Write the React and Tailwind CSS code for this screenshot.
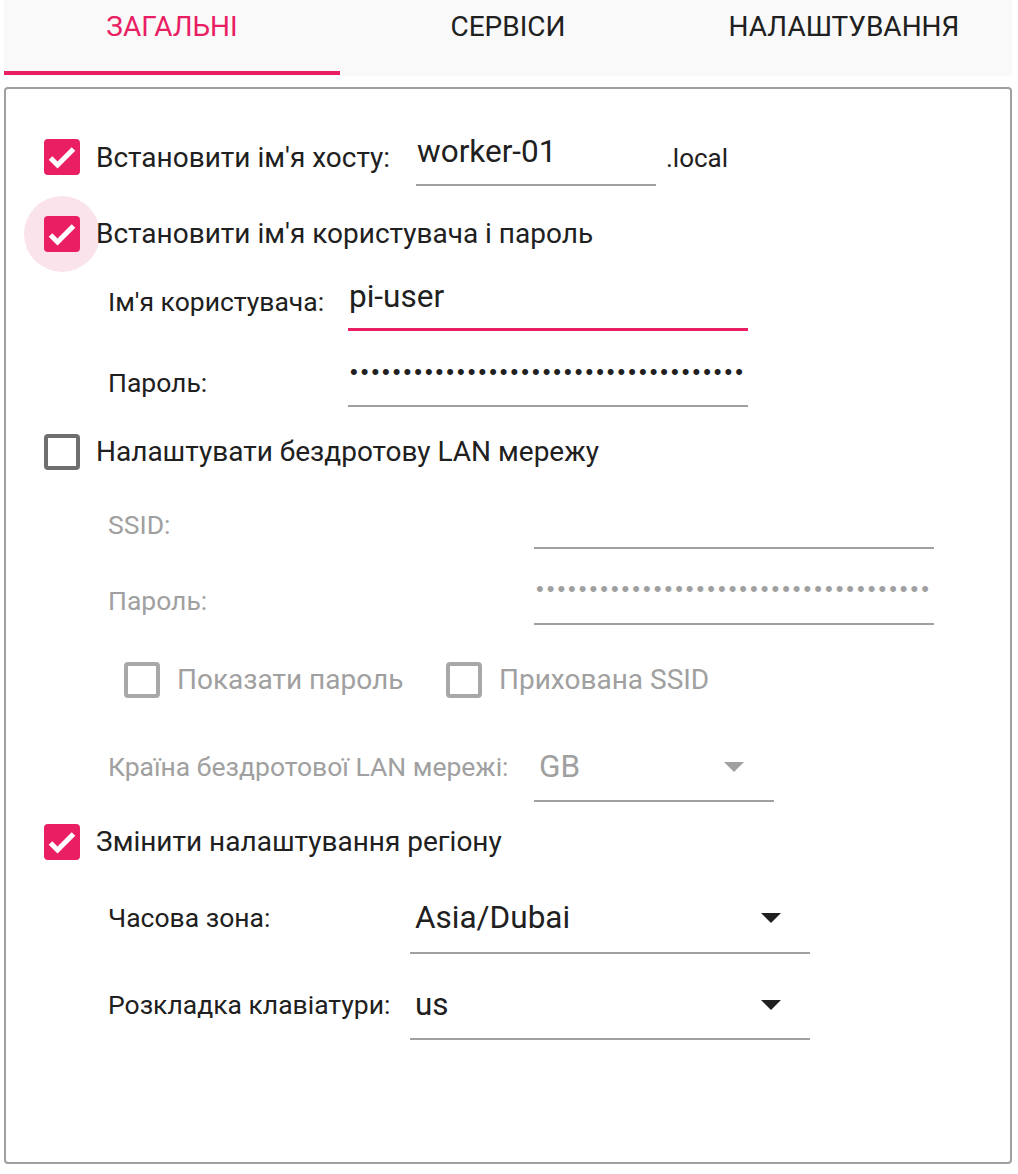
import React from 'react'

function Check({ checked, disabled, halo }) {
    return (
        <div className="relative w-[36px] h-[36px] shrink-0">
            {halo && <div className="absolute -inset-[20px] rounded-full bg-[#fbe3eb]" />}
            {checked ? (
                <div className="relative w-full h-full rounded-[4px] bg-[#e91e63]">
                    <svg viewBox="0 0 36 36" className="w-full h-full">
                        <path d="M6.5 19 L13.5 26 L29.5 10" fill="none" stroke="#fff" strokeWidth="5" />
                    </svg>
                </div>
            ) : (
                <div className={`relative w-full h-full rounded-[4px] border-[4px] ${disabled ? 'border-[#a8a8a8]' : 'border-[#6f6f6f]'}`} />
            )}
        </div>
    )
}

function Arrow({ disabled }) {
    return (
        <svg viewBox="0 0 20 10" className="w-[20px] h-[10px]">
            <path d="M0 0 H20 L10 10 Z" fill={disabled ? '#a0a0a0' : '#202020'} />
        </svg>
    )
}

// masked password text
function Dots({ count, disabled }) {
    return (
        <div className={`font-['Liberation_Sans',sans-serif] text-[22px] leading-[24px] tracking-[3px] whitespace-nowrap ${disabled ? 'text-[#a0a0a0]' : 'text-[#202020]'}`}>
            {'•'.repeat(count)}
        </div>
    )
}

export default function App() {
    return (
        <div className="w-[1018px] h-[1174px] bg-white font-['Roboto',sans-serif] text-[#202020]">
            {/* Tabs */}
            <div className="ml-[4px] w-[1008px] h-[76px] flex bg-[#f9f9f9]">
                {['ЗАГАЛЬНІ', 'СЕРВІСИ', 'НАЛАШТУВАННЯ'].map((t, i) => (
                    <div key={t} className={`flex-1 h-[75px] flex justify-center border-b-4 ${i === 0 ? 'border-[#e91e63] text-[#e91e63]' : 'border-transparent text-[#202020]'}`}>
                        <span className="pt-[10px] text-[28px] leading-[34px]">{t}</span>
                    </div>
                ))}
            </div>

            {/* Panel */}
            <div className="mt-[11px] ml-[4px] w-[1008px] h-[1077px] border-2 border-[#a0a0a0] rounded-[4px] pt-[31px]">
                {/* hostname */}
                <div className="flex items-start h-[66px] pl-[38px]">
                    <div className="mt-[19px]"><Check checked /></div>
                    <div className="ml-[16px] w-[320px] mt-[21px] text-[28px] leading-[34px]">Встановити ім'я хосту:</div>
                    <div className="w-[240px] h-[66px] border-b-2 border-[#a0a0a0] pt-[13px] pl-[1px] text-[31.5px] leading-[38px]">worker-01</div>
                    <div className="ml-[10px] mt-[23px] text-[26px] leading-[30px]">.local</div>
                </div>

                {/* user + password */}
                <div className="flex items-start h-[84px] pl-[38px]">
                    <div className="mt-[30px]"><Check checked halo /></div>
                    <div className="relative ml-[16px] mt-[31px] text-[28px] leading-[34px]">Встановити ім'я користувача і пароль</div>
                </div>
                <div className="flex items-start h-[60px] pl-[102px]">
                    <div className="w-[240px] mt-[16px] text-[26.5px] leading-[32px]">Ім'я користувача:</div>
                    <div className="w-[400px] h-[61px] border-b-[3px] border-[#e91e63] pt-[8px] pl-[1px] text-[31.5px] leading-[38px]">pi-user</div>
                </div>
                <div className="flex items-start h-[77px] pl-[102px]">
                    <div className="w-[240px] mt-[37px] text-[26.5px] leading-[32px]">Пароль:</div>
                    <div className="w-[400px] h-[77px] border-b-2 border-[#a0a0a0] pt-[30px] pl-[2px]">
                        <Dots count={37} />
                    </div>
                </div>

                {/* wireless */}
                <div className="flex items-center h-[90px] pl-[38px]">
                    <Check />
                    <div className="ml-[16px] text-[28px] leading-[34px]">Налаштувати бездротову LAN мережу</div>
                </div>
                <div className="flex items-start h-[52px] pl-[102px] text-[#a0a0a0]">
                    <div className="w-[426px] mt-[12px] text-[26.5px] leading-[32px]">SSID:</div>
                    <div className="w-[400px] h-[52px] border-b-2 border-[#a0a0a0]" />
                </div>
                <div className="flex items-start h-[76px] pl-[102px] text-[#a0a0a0]">
                    <div className="w-[426px] mt-[36px] text-[26.5px] leading-[32px]">Пароль:</div>
                    <div className="w-[400px] h-[76px] border-b-2 border-[#a0a0a0] pt-[28px] pl-[2px]">
                        <Dots count={37} disabled />
                    </div>
                </div>
                <div className="flex items-center h-[110px] pl-[118px] text-[#a0a0a0] text-[28px] leading-[34px]">
                    <Check disabled />
                    <div className="ml-[17px] w-[269px]">Показати пароль</div>
                    <Check disabled />
                    <div className="ml-[17px]">Прихована SSID</div>
                </div>
                <div className="flex items-start h-[67px] pl-[102px] text-[#a0a0a0]">
                    <div className="w-[426px] mt-[16px] text-[26.5px] leading-[32px]">Країна бездротової LAN мережі:</div>
                    <div className="w-[240px] h-[67px] border-b-2 border-[#a0a0a0] pt-[13px] pl-[5px] pr-[30px] flex items-start justify-between">
                        <span className="text-[31.5px] leading-[38px]">GB</span>
                        <div className="mt-[14px]"><Arrow disabled /></div>
                    </div>
                </div>

                {/* locale */}
                <div className="flex items-center h-[80px] pl-[38px]">
                    <Check checked />
                    <div className="ml-[16px] text-[28px] leading-[34px]">Змінити налаштування регіону</div>
                </div>
                <div className="flex items-start h-[72px] pl-[102px]">
                    <div className="w-[302px] mt-[20px] text-[26.5px] leading-[32px]">Часова зона:</div>
                    <div className="w-[400px] h-[72px] border-b-2 border-[#a0a0a0] pt-[17px] pl-[5px] pr-[29px] flex items-start justify-between">
                        <span className="text-[31.5px] leading-[38px]">Asia/Dubai</span>
                        <div className="mt-[14px]"><Arrow /></div>
                    </div>
                </div>
                <div className="flex items-start h-[86px] pl-[102px]">
                    <div className="w-[302px] mt-[35px] text-[26.5px] leading-[32px]">Розкладка клавіатури:</div>
                    <div className="w-[400px] h-[86px] border-b-2 border-[#a0a0a0] pt-[32px] pl-[5px] pr-[29px] flex items-start justify-between">
                        <span className="text-[31.5px] leading-[38px]">us</span>
                        <div className="mt-[14px]"><Arrow /></div>
                    </div>
                </div>
            </div>
        </div>
    )
}
